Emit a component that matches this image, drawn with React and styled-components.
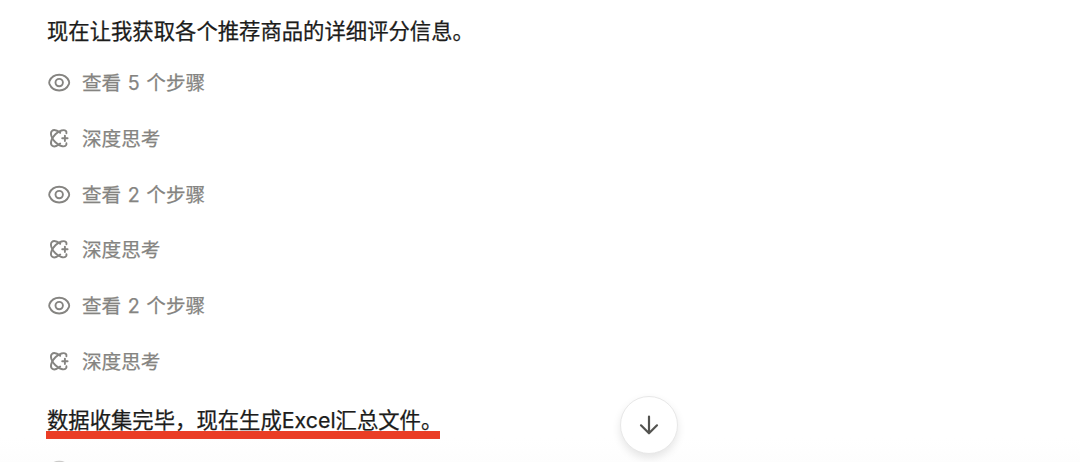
import React from 'react';
import styled, { createGlobalStyle } from 'styled-components';

const steps = [
  { type: 'view', text: '查看 5 个步骤' },
  { type: 'think', text: '深度思考' },
  { type: 'view', text: '查看 2 个步骤' },
  { type: 'think', text: '深度思考' },
  { type: 'view', text: '查看 2 个步骤' },
  { type: 'think', text: '深度思考' },
];

const EyeIcon = () => (
  <Icon viewBox="0 0 24 24">
    <path d="M2.5 10C4.1 6.3 7.6 3.7 12.2 3.7S20.3 6.3 21.9 10Q22.5 11.6 21.9 13.2C20.3 16.9 16.8 19.5 12.2 19.5S4.1 16.9 2.5 13.2Q1.9 11.6 2.5 10Z" />
    <circle cx="12.2" cy="11.6" r="3.7" />
  </Icon>
);

const ThinkIcon = () => (
  <Icon viewBox="0 0 24 24">
    <path d="M19.4 6.2C19.6 5.2 19.4 4.5 18.9 4C17 2.2 12.4 3.4 8.4 7.3S2.9 16.5 4.8 18.4C6.6 20.2 10.2 19 13.2 16.6" />
    <path d="M13.2 5.8C10.2 3.4 6.6 2.3 4.8 4.1C2.9 6 4.4 11.4 8.4 15.3S17 20.3 18.9 18.4C19.4 17.9 19.6 17.2 19.4 16.3" />
    <path d="M17.9 8.6V14M15.2 11.3H20.6" />
  </Icon>
);

const ArrowIcon = () => (
  <Arrow viewBox="0 0 24 24">
    <path d="M12 3.5V20M4 12.3L12 20.3L20 12.3" />
  </Arrow>
);

const App = () => {
  return (
    <Page>
      <GlobalStyle />
      <Message>现在让我获取各个推荐商品的详细评分信息。</Message>
      <Steps>
        {steps.map((step, i) => (
          <Step key={i}>
            {step.type === 'view' ? <EyeIcon /> : <ThinkIcon />}
            <span>{step.text}</span>
          </Step>
        ))}
      </Steps>
      <Message>
        <Marked>数据收集完毕，现在生成Excel汇总文件。</Marked>
      </Message>
      <NextStep>
        <EyeIcon />
      </NextStep>
      <Fade />
      <ScrollButton aria-label="scroll to bottom">
        <ArrowIcon />
      </ScrollButton>
    </Page>
  );
}

const GlobalStyle = createGlobalStyle`
    body {
        margin: 0;
        background-color: #ffffff;
    }
`;

const Page = styled.main`
    position: relative;
    box-sizing: border-box;
    height: 462px;
    padding: 14px 47px 0;
    overflow: hidden;
    background-color: #ffffff;
    font-family: "Inter", "Noto Sans CJK SC", sans-serif;
`;

const Message = styled.p`
    height: 34px;
    margin: 0;
    color: #1c1c1b;
    font-size: 21.35px;
    line-height: 34px;
    white-space: nowrap;
    -webkit-text-stroke: 0.25px currentColor;
`;

const Marked = styled.span`
    position: relative;

    &::after {
        content: "";
        position: absolute;
        left: -1px;
        top: 24px;
        width: 394px;
        height: 8px;
        background-color: #ea3d25;
    }
`;

const Steps = styled.div`
    display: flex;
    flex-direction: column;
    gap: 27.8px;
    padding: 21px 0 27px;
`;

const Step = styled.div`
    display: flex;
    align-items: center;
    gap: 11px;
    height: 28px;
    color: #858481;
    font-size: 19.6px;
    line-height: 28px;
    word-spacing: 1.1px;
    white-space: nowrap;
    -webkit-text-stroke: 0.25px currentColor;
`;

const Icon = styled.svg`
    width: 24px;
    height: 24px;
    flex-shrink: 0;
    fill: none;
    stroke: currentColor;
    stroke-width: 1.9;
    stroke-linecap: round;
    stroke-linejoin: round;
`;

const NextStep = styled(Step)`
    margin-top: 19px;
`;

const Fade = styled.div`
    position: absolute;
    left: 0;
    right: 0;
    bottom: 0;
    height: 24px;
    background: linear-gradient(rgba(252, 252, 252, 0), rgba(252, 252, 252, 0.6));
`;

const ScrollButton = styled.button`
    position: absolute;
    left: 620px;
    top: 396px;
    display: flex;
    align-items: center;
    justify-content: center;
    width: 58px;
    height: 58px;
    padding: 0;
    border: 1px solid #e8e8e8;
    border-radius: 50%;
    background-color: #ffffff;
    box-shadow: 0 4px 9px rgba(0, 0, 0, 0.1);
    cursor: pointer;
`;

const Arrow = styled.svg`
    width: 24px;
    height: 24px;
    fill: none;
    stroke: #535350;
    stroke-width: 2.2;
    stroke-linecap: round;
    stroke-linejoin: round;
`;

export default App;
